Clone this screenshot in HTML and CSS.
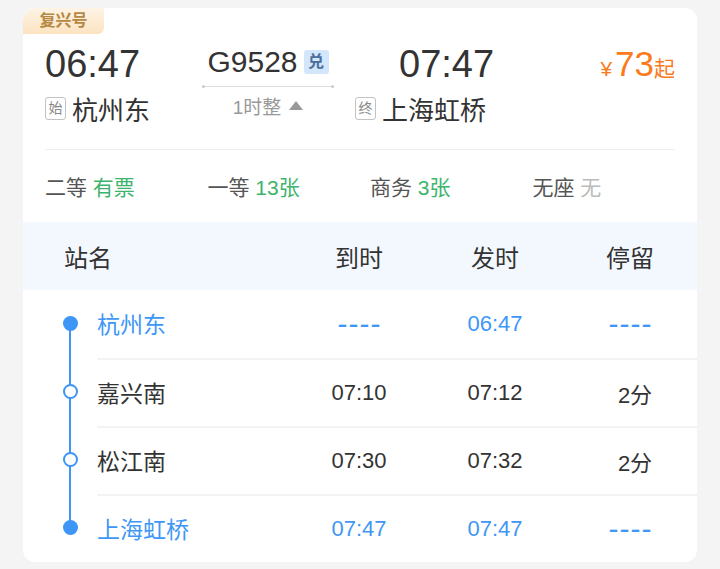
FILE: index.html
```html
<!DOCTYPE html>
<html lang="zh-CN">
  <head>
    <meta charset="UTF-8">
    <title>G9528</title>
    <link rel="stylesheet" href="styles.css">
  </head>
  <body>
    <div class="card">
      <div class="badge">复兴号</div>

      <div class="trip">
        <div class="end from">
          <div class="clock">06:47</div>
          <div class="station"><span class="tag">始</span>杭州东</div>
        </div>
        <div class="train">
          <div class="train-no">G9528<span class="dui">兑</span></div>
          <div class="track"></div>
          <div class="dur">1时整 <span class="arrow"></span></div>
        </div>
        <div class="end to">
          <div class="clock">07:47</div>
          <div class="station"><span class="tag">终</span>上海虹桥</div>
        </div>
        <div class="price"><span class="yen">¥</span>73<span class="qi">起</span></div>
      </div>

      <div class="seats">
        <div class="seat">二等 <span class="ok">有票</span></div>
        <div class="seat">一等 <span class="ok">13张</span></div>
        <div class="seat">商务 <span class="ok">3张</span></div>
        <div class="seat">无座 <span class="none">无</span></div>
      </div>

      <div class="thead">
        <div class="c-name">站名</div>
        <div class="c">到时</div>
        <div class="c">发时</div>
        <div class="c">停留</div>
      </div>

      <div class="stop first hl">
        <div class="tl"><span class="dot full"></span></div>
        <div class="cells">
          <div class="c-name">杭州东</div>
          <div class="c dash">----</div>
          <div class="c">06:47</div>
          <div class="c dash">----</div>
        </div>
      </div>
      <div class="stop">
        <div class="tl"><span class="dot"></span></div>
        <div class="cells">
          <div class="c-name">嘉兴南</div>
          <div class="c">07:10</div>
          <div class="c">07:12</div>
          <div class="c stay">2分</div>
        </div>
      </div>
      <div class="stop">
        <div class="tl"><span class="dot"></span></div>
        <div class="cells">
          <div class="c-name">松江南</div>
          <div class="c">07:30</div>
          <div class="c">07:32</div>
          <div class="c stay">2分</div>
        </div>
      </div>
      <div class="stop last hl">
        <div class="tl"><span class="dot full"></span></div>
        <div class="cells">
          <div class="c-name">上海虹桥</div>
          <div class="c">07:47</div>
          <div class="c">07:47</div>
          <div class="c dash">----</div>
        </div>
      </div>
    </div>
  </body>
</html>
```

FILE: styles.css
```css
body {
  margin: 0;
  background-color: #f4f4f4;
  font-family: "Liberation Sans", "Noto Sans CJK SC", sans-serif;
  color: #333;
}
.card {
  width: 674px;
  height: 554px;
  margin: 8px 0 0 23px;

  background-color: #fff;
  border-radius: 12px;
  overflow: hidden;
}
.badge {
  width: 81px;
  height: 26px;

  background: linear-gradient(#fdf4e6, #fbe3c0);
  border-radius: 12px 0 6px 0;

  color: #b58843;
  font-size: 16px;
  font-weight: bold;
  line-height: 26px;
  text-align: center;
}

/* 车次信息 */
.trip {
  display: flex;
  height: 107px;
  margin: 0 22px;
  padding-top: 8px;
  border-bottom: 1px solid #eeeeee;
}
.end {
  display: flex;
  flex-direction: column;
}
.from {
  width: 157px;
}
.to {
  width: 200px;
  margin-left: 21px;
}
.to .clock {
  padding-left: 44px;
}
.clock {
  height: 44px;
  line-height: 44px;
  font-size: 38px;
}
.station {
  height: 44px;
  display: flex;
  align-items: center;
  font-size: 26px;
  color: #333;
}
.tag {
  width: 19px;
  height: 21px;
  margin-right: 6px;

  border: 1px solid #c2c2c2;
  border-radius: 3px;

  font-size: 14px;
  line-height: 21px;
  text-align: center;
  color: #888;
}
.train {
  width: 132px;
  display: flex;
  flex-direction: column;
  align-items: center;
}
.train-no {
  height: 40px;
  display: flex;
  align-items: center;
  font-size: 30px;
}
.dui {
  width: 25px;
  height: 24px;
  margin-left: 6px;

  background-color: #d3e6fb;
  border-radius: 3px;

  font-size: 16px;
  font-weight: bold;
  line-height: 24px;
  text-align: center;
  color: #4a6f9c;
}
.track {
  position: relative;
  width: 132px;
  height: 1px;
  margin-top: 4px;
  background-color: #ddd;
}
.track::before, .track::after {
  content: "";
  position: absolute;
  top: -1px;
  width: 3px;
  height: 3px;
  border-radius: 50%;
  background-color: #ccc;
}
.track::before { left: 0; }
.track::after { right: 0; }
.dur {
  margin-top: 5px;
  font-size: 19px;
  color: #999;
  display: flex;
  align-items: center;
  gap: 4px;
}
.arrow {
  width: 0;
  height: 0;
  border-left: 7px solid transparent;
  border-right: 7px solid transparent;
  border-bottom: 9px solid #999;
  margin-left: 4px;
}
.price {
  margin-left: auto;
  height: 44px;
  line-height: 44px;
  font-size: 35px;
  color: #fa7a1c;
}
.yen {
  font-size: 21px;
  margin-right: 3px;
}
.qi {
  font-size: 21px;
}

/* 座位 */
.seats {
  height: 72px;
  padding-left: 22px;
  display: grid;
  grid-template-columns: repeat(4, 162.5px);
  align-items: center;
}
.seat {
  font-size: 21px;
  color: #555;
}
.ok { color: #3cb46c; }
.none { color: #bbb; }

/* 经停表 */
.thead {
  height: 68px;
  background-color: #f3f8fe;
  display: grid;
  grid-template-columns: 1fr 136px 136px 134px;
  align-items: center;
  padding-left: 41px;
  font-size: 24px;
  color: #333;
}
.c {
  text-align: center;
}
.stop {
  display: flex;
  height: 68px;
}
.tl {
  position: relative;
  width: 74px;
}
.tl::before {
  content: "";
  position: absolute;
  left: 46px;
  top: 0;
  bottom: 0;
  width: 2px;
  background-color: #3d95f5;
}
.first .tl::before { top: 34px; }
.last .tl::before { bottom: 34px; }
.dot {
  position: absolute;
  left: 40px;
  top: 26px;
  width: 11px;
  height: 11px;
  border: 2px solid #3d95f5;
  border-radius: 50%;
  background-color: #fff;
}
.dot.full {
  width: 15px;
  height: 15px;
  border: none;
  background-color: #3d95f5;
}
.cells {
  flex: 1;
  display: grid;
  grid-template-columns: 1fr 136px 136px 134px;
  align-items: center;
  font-size: 22px;
  color: #333;
}
.c-name {
  font-size: 23px;
  padding-bottom: 3px;
}
.thead .c-name {
  font-size: 24px;
  padding-bottom: 0;
}
.stop + .stop .cells {
  border-top: 2px solid #f3f3f3;
}
.hl .cells {
  color: #3e97f6;
}
.dash {
  font-size: 30px;
  line-height: 22px;
  letter-spacing: 1px;
  padding-left: 1px;
}
.stay {
  padding-left: 10px;
}
```
